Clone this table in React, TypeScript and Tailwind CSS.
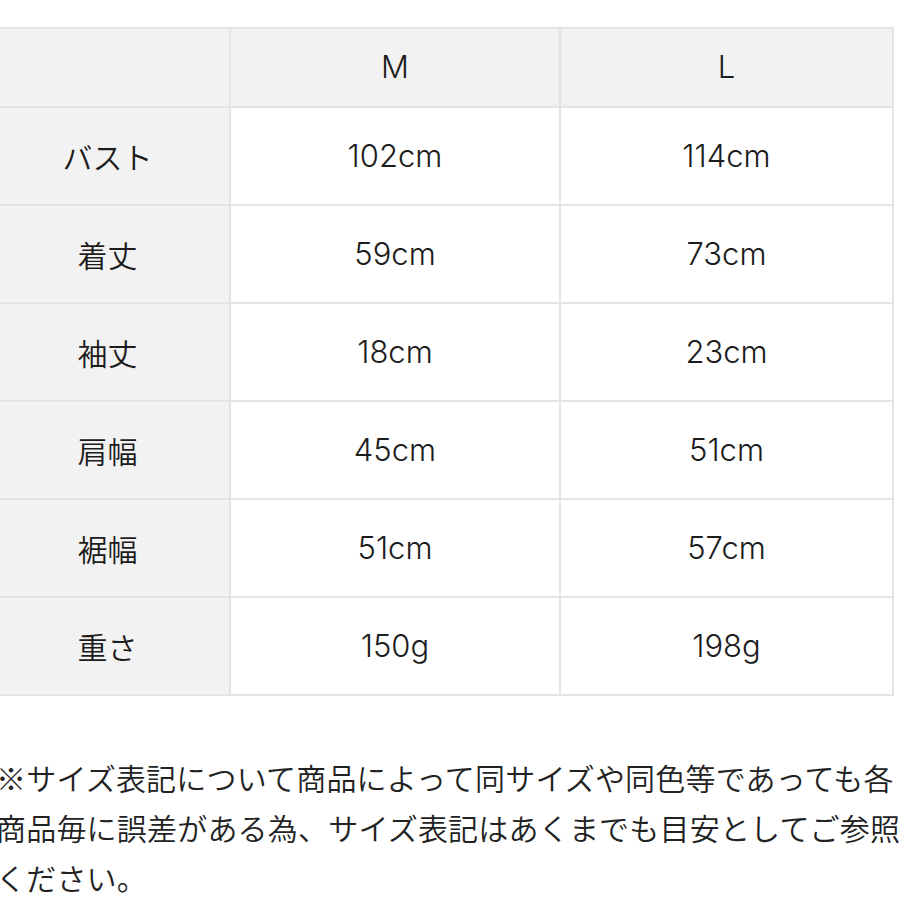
const ROWS = [
  { label: "バスト", m: "102cm", l: "114cm" },
  { label: "着丈", m: "59cm", l: "73cm" },
  { label: "袖丈", m: "18cm", l: "23cm" },
  { label: "肩幅", m: "45cm", l: "51cm" },
  { label: "裾幅", m: "51cm", l: "57cm" },
  { label: "重さ", m: "150g", l: "198g" },
];

const FONT = "font-['Noto_Sans_CJK_JP','Noto_Sans',sans-serif]";
const NUM = "font-['Inter','Noto_Sans_CJK_JP',sans-serif] font-light text-[31px]";

export default function App() {
  return (
    <div className={`w-[900px] h-[900px] bg-white overflow-hidden text-[#1c1c1c] ${FONT}`}>
      <div className="pt-[27px] ml-[-14px]">
        <div className="w-[908px] grid grid-cols-[243px_328px_331px] gap-[2px] bg-[#e4e4e4] pt-[2px] pr-[2px] pb-[2px]">
          <div className="h-[77px] bg-[#f2f2f2]" />
          <div className={`h-[77px] bg-[#f2f2f2] flex items-center justify-center ${NUM}`}>M</div>
          <div className={`h-[77px] bg-[#f2f2f2] flex items-center justify-center ${NUM}`}>L</div>
          {ROWS.map((r) => (
            <div key={r.label} className="contents">
              <div className="h-[96px] bg-[#f2f2f2] flex items-center justify-center text-[30px] font-[350]">
                {r.label}
              </div>
              <div className={`h-[96px] bg-white flex items-center justify-center ${NUM}`}>
                {r.m}
              </div>
              <div className={`h-[96px] bg-white flex items-center justify-center ${NUM}`}>
                {r.l}
              </div>
            </div>
          ))}
        </div>
      </div>

      <p className="mt-[56px] ml-[-4px] text-[30px] leading-[50px] tracking-[0.2px] whitespace-nowrap font-[350] text-[#222]">
        ※サイズ表記について商品によって同サイズや同色等であっても各
        <br />
        商品毎に誤差がある為、サイズ表記はあくまでも目安としてご参照
        <br />
        ください。
      </p>
    </div>
  );
}
